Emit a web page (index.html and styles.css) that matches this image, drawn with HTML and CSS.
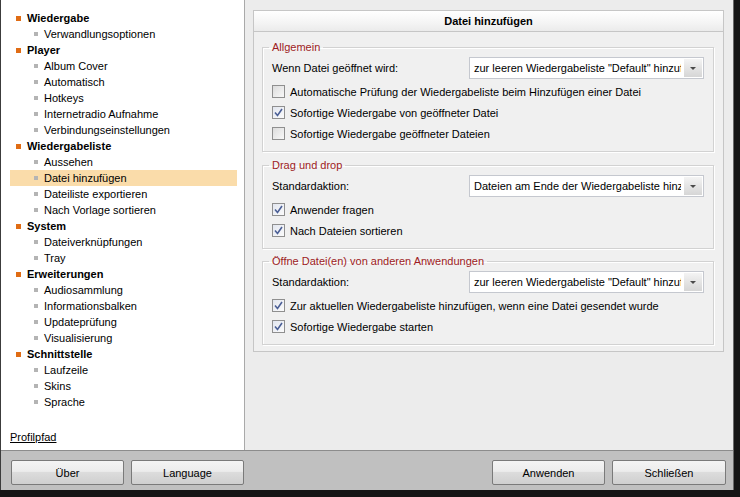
FILE: index.html
```html
<!DOCTYPE html>
<html lang="de">
<head>
    <meta charset="UTF-8">
    <title>Einstellungen</title>
    <link rel="stylesheet" href="styles.css">
</head>
<body>
    <div class="window">
        <div class="main">
            <aside class="sidebar">
                <ul class="tree">
                    <li class="cat">Wiedergabe</li>
                    <li class="sub">Verwandlungsoptionen</li>
                    <li class="cat">Player</li>
                    <li class="sub">Album Cover</li>
                    <li class="sub">Automatisch</li>
                    <li class="sub">Hotkeys</li>
                    <li class="sub">Internetradio Aufnahme</li>
                    <li class="sub">Verbindungseinstellungen</li>
                    <li class="cat">Wiedergabeliste</li>
                    <li class="sub">Aussehen</li>
                    <li class="sub active">Datei hinzufügen</li>
                    <li class="sub">Dateiliste exportieren</li>
                    <li class="sub">Nach Vorlage sortieren</li>
                    <li class="cat">System</li>
                    <li class="sub">Dateiverknüpfungen</li>
                    <li class="sub">Tray</li>
                    <li class="cat">Erweiterungen</li>
                    <li class="sub">Audiosammlung</li>
                    <li class="sub">Informationsbalken</li>
                    <li class="sub">Updateprüfung</li>
                    <li class="sub">Visualisierung</li>
                    <li class="cat">Schnittstelle</li>
                    <li class="sub">Laufzeile</li>
                    <li class="sub">Skins</li>
                    <li class="sub">Sprache</li>
                </ul>
                <a class="profile" href="#">Profilpfad</a>
            </aside>

            <section class="content">
                <div class="panel-title">Datei hinzufügen</div>
                <div class="panel-body">
                    <fieldset class="group">
                        <legend>Allgemein</legend>
                        <div class="row">
                            <span>Wenn Datei geöffnet wird:</span>
                            <div class="combo"><span class="combo-text">zur leeren Wiedergabeliste "Default" hinzufügen</span><span class="combo-btn"></span></div>
                        </div>
                        <label class="check"><span class="box"></span>Automatische Prüfung der Wiedergabeliste beim Hinzufügen einer Datei</label>
                        <label class="check"><span class="box checked"><svg width="9" height="9" viewBox="0 0 9 9"><path d="M1 4.5 L3.5 7.5 L8 1" fill="none" stroke="#4b5f96" stroke-width="1.6"/></svg></span>Sofortige Wiedergabe von geöffneter Datei</label>
                        <label class="check"><span class="box"></span>Sofortige Wiedergabe geöffneter Dateien</label>
                    </fieldset>

                    <fieldset class="group">
                        <legend>Drag und drop</legend>
                        <div class="row">
                            <span>Standardaktion:</span>
                            <div class="combo"><span class="combo-text">Dateien am Ende der Wiedergabeliste hinzufügen</span><span class="combo-btn"></span></div>
                        </div>
                        <label class="check"><span class="box checked"><svg width="9" height="9" viewBox="0 0 9 9"><path d="M1 4.5 L3.5 7.5 L8 1" fill="none" stroke="#4b5f96" stroke-width="1.6"/></svg></span>Anwender fragen</label>
                        <label class="check"><span class="box checked"><svg width="9" height="9" viewBox="0 0 9 9"><path d="M1 4.5 L3.5 7.5 L8 1" fill="none" stroke="#4b5f96" stroke-width="1.6"/></svg></span>Nach Dateien sortieren</label>
                    </fieldset>

                    <fieldset class="group">
                        <legend>Öffne Datei(en) von anderen Anwendungen</legend>
                        <div class="row">
                            <span>Standardaktion:</span>
                            <div class="combo"><span class="combo-text">zur leeren Wiedergabeliste "Default" hinzufügen</span><span class="combo-btn"></span></div>
                        </div>
                        <label class="check"><span class="box checked"><svg width="9" height="9" viewBox="0 0 9 9"><path d="M1 4.5 L3.5 7.5 L8 1" fill="none" stroke="#4b5f96" stroke-width="1.6"/></svg></span>Zur aktuellen Wiedergabeliste hinzufügen, wenn eine Datei gesendet wurde</label>
                        <label class="check"><span class="box checked"><svg width="9" height="9" viewBox="0 0 9 9"><path d="M1 4.5 L3.5 7.5 L8 1" fill="none" stroke="#4b5f96" stroke-width="1.6"/></svg></span>Sofortige Wiedergabe starten</label>
                    </fieldset>
                </div>
            </section>
        </div>

        <div class="footer">
            <button class="btn">Über</button>
            <button class="btn">Language</button>
            <span class="spacer"></span>
            <button class="btn">Anwenden</button>
            <button class="btn">Schließen</button>
        </div>
    </div>
</body>
</html>
```

FILE: styles.css
```css
body {
    margin: 0;
    padding: 0;
    background-color: #151515;
    font-family: 'Liberation Sans', Arial, sans-serif;
    font-size: 11px;
    color: #000;
}
.window {
    width: 732px;
    height: 490px;
    border-left: 1px solid #3c3c3c;
    border-right: 1px solid #6a6a6a;
    display: flex;
    flex-direction: column;
}
.main {
    height: 450px;
    display: flex;
}

/* left tree */
.sidebar {
    width: 243px;
    background-color: #ffffff;
    border-right: 1px solid #a9a9a9;
    display: flex;
    flex-direction: column;
}
.tree {
    list-style-type: none;
    margin: 0;
    padding: 10px 0 0 0;
}
.tree li {
    height: 16px;
    line-height: 16px;
    margin: 0 7px 0 9px;
    display: flex;
    align-items: center;
    white-space: nowrap;
}
.tree .cat {
    font-weight: bold;
    padding-left: 6px;
}
.tree .cat::before {
    content: "";
    width: 5px;
    height: 5px;
    background-color: #e06c14;
    margin-right: 6px;
}
.tree .sub {
    padding-left: 24px;
}
.tree .sub::before {
    content: "";
    width: 4px;
    height: 4px;
    background-color: #b4b4b4;
    margin-right: 6px;
}
.tree .active {
    background-color: #fadcaa;
}
.profile {
    margin-top: auto;
    margin-left: 9px;
    padding-bottom: 6px;
    line-height: 13px;
    color: #000;
    text-decoration: underline;
}

/* right panel */
.content {
    flex: 1;
    background-color: #ececec;
    padding: 10px 9px 0 8px;
}
.panel-title {
    height: 20px;
    line-height: 20px;
    border: 1px solid #c6c6c6;
    border-bottom: none;
    background: linear-gradient(#ffffff, #f4f4f4 60%, #ebebeb);
    text-align: center;
    font-weight: bold;
}
.panel-body {
    border: 1px solid #c6c6c6;
    background-color: #f0f0f0;
    padding: 9px 9px 6px 8px;
}
.group {
    margin: 0 0 6px 0;
    padding: 3px 9px 7px 9px;
    border: 1px solid #d2d2d2;
    box-shadow: inset 1px 1px 0 #ffffff, 1px 1px 0 #ffffff;
}
.group:first-child {
    margin-bottom: 7px;
}
.group:last-child {
    margin-bottom: 0;
}
.group legend {
    padding: 0 3px;
    margin-left: -3px;
    line-height: 13px;
    color: #9e1c24;
}
.row {
    height: 22px;
    display: flex;
    align-items: center;
    justify-content: space-between;
    margin-bottom: 2px;
}
.combo {
    width: 233px;
    height: 20px;
    border: 1px solid #c5c8cf;
    background-color: #ffffff;
    display: flex;
    align-items: center;
}
.combo-text {
    flex: 1;
    overflow: hidden;
    white-space: nowrap;
    padding-left: 4px;
}
.combo-btn {
    width: 18px;
    height: 18px;
    margin: 0 1px 0 3px;
    background: linear-gradient(#f4f4f4, #e4e4e4 50%, #d6d6d6);
    display: flex;
    align-items: center;
    justify-content: center;
}
.combo-btn::after {
    content: "";
    border-left: 3px solid transparent;
    border-right: 3px solid transparent;
    border-top: 3px solid #4a4a4a;
}
.check {
    height: 21px;
    display: flex;
    align-items: center;
    white-space: nowrap;
}
.box {
    width: 11px;
    height: 11px;
    border: 1px solid #8f8f8f;
    background: linear-gradient(135deg, #dcdcdc, #f8f8f8);
    margin-right: 5px;
    display: flex;
    align-items: center;
    justify-content: center;
}
.box.checked {
    background: linear-gradient(135deg, #e2e6ef, #fbfbfb);
}

/* bottom bar */
.footer {
    flex: 1;
    background-color: #c0c0c0;
    border-top: 1px solid #8c8c8c;
    padding: 9px 7px 0 10px;
    display: flex;
    align-items: flex-start;
    gap: 7px;
}
.spacer {
    flex: 1;
}
.btn {
    width: 113px;
    height: 25px;
    border: 1px solid #7a7a7a;
    border-radius: 2px;
    background: linear-gradient(#f4f4f4, #ececec 45%, #dcdcdc 50%, #cfcfcf);
    font-family: 'Liberation Sans', Arial, sans-serif;
    font-size: 11px;
    color: #000;
    padding: 0;
}
.btn:last-child {
    width: 114px;
}
```
